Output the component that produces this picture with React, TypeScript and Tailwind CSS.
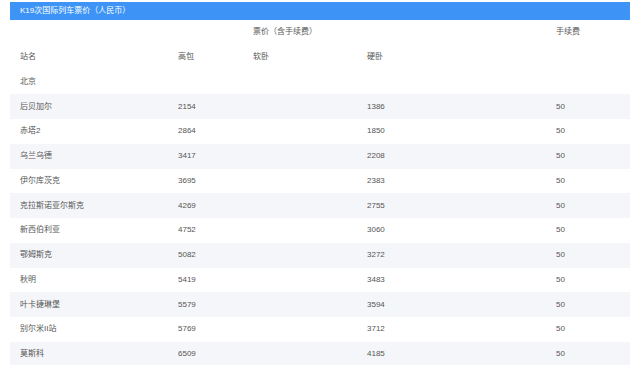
const rows: [string, string, string, string][] = [
  ["后贝加尔", "2154", "1386", "50"],
  ["赤塔2", "2864", "1850", "50"],
  ["乌兰乌德", "3417", "2208", "50"],
  ["伊尔库茨克", "3695", "2383", "50"],
  ["克拉斯诺亚尔斯克", "4269", "2755", "50"],
  ["新西伯利亚", "4752", "3060", "50"],
  ["鄂姆斯克", "5082", "3272", "50"],
  ["秋明", "5419", "3483", "50"],
  ["叶卡捷琳堡", "5579", "3594", "50"],
  ["别尔米II站", "5769", "3712", "50"],
  ["莫斯科", "6509", "4185", "50"],
]

const grid = "grid grid-cols-[158px_75px_114px_189px_84px] h-[24.75px] items-center"

function Row({ cells, shaded }: { cells: string[]; shaded?: boolean }) {
  return (
    <div className={`${grid} ${shaded ? "bg-[#f5f6f9]" : ""}`}>
      {cells.map((c, i) => (
        <div key={i} className="pl-[10px] whitespace-nowrap">
          {c}
        </div>
      ))}
    </div>
  )
}

export default function App() {
  return (
    <div
      className="w-[640px] h-[365px] overflow-hidden bg-white px-[10px] pt-[2px] text-[8px] text-[#555] leading-none"
      style={{ fontFamily: '"Liberation Sans", "Noto Sans CJK SC", sans-serif' }}
    >
      <div className="w-[620px]">
        <div className="h-[18px] bg-[#3d94f6] text-white flex items-center pl-[10px]">
          K19次国际列车票价（人民币）
        </div>
        <Row cells={["", "", "票价（含手续费）", "", "手续费"]} />
        <Row cells={["站名", "高包", "软卧", "硬卧", ""]} />
        <Row cells={["北京", "", "", "", ""]} />
        {rows.map((r, i) => (
          <Row key={r[0]} cells={[r[0], r[1], "", r[2], r[3]]} shaded={i % 2 === 0} />
        ))}
      </div>
    </div>
  )
}
